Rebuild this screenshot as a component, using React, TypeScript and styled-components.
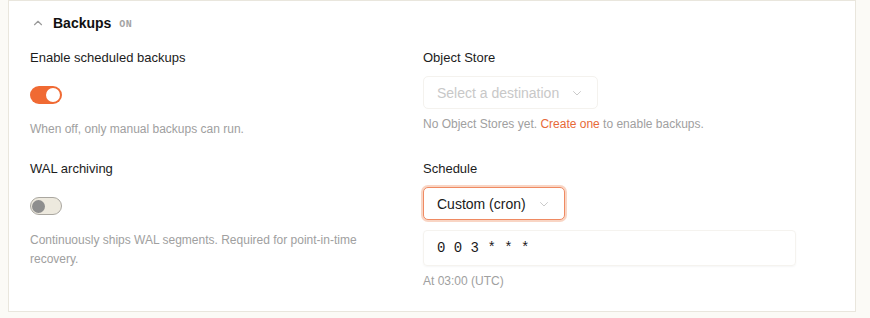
import React from "react";
import styled, { createGlobalStyle, css } from "styled-components";

const Global = createGlobalStyle`
  html, body { margin: 0; padding: 0; background: #fbfaf6; }
  body { font-family: "Liberation Sans", Arial, sans-serif; color: #1c1c1c; }
  * { box-sizing: border-box; }
`;

const Page = styled.div`
  padding: 0 14px 0 8px;
  height: 318px;
  overflow: hidden;
`;

const Card = styled.section`
  background: #ffffff;
  border: 1px solid #e9e6dd;
  padding: 13px 21px 20px 21px;
`;

const Header = styled.div`
  display: flex;
  align-items: center;
  height: 18px;
`;

const Chevron = styled.svg`
  width: 14px;
  height: 14px;
  margin-left: 1px;
  margin-right: 8px;
  color: #9a9a9a;
`;

const Title = styled.h3`
  margin: 0;
  font-size: 14px;
  font-weight: 700;
  line-height: 18px;
  color: #111;
`;

const Badge = styled.span`
  margin-left: 8px;
  font-family: "Liberation Mono", "DejaVu Sans Mono", monospace;
  font-size: 10px;
  font-weight: 700;
  letter-spacing: 0.3px;
  color: #a3a3a3;
  padding-top: 2px;
`;

const Grid = styled.div`
  display: grid;
  grid-template-columns: 373px 373px;
  column-gap: 20px;
  row-gap: 22px;
  margin-top: 18px;
`;

const Field = styled.div`
  display: flex;
  flex-direction: column;
`;

const Label = styled.div`
  font-size: 13px;
  line-height: 16px;
  color: #1c1c1c;
  margin-bottom: 10px;
`;

const ToggleRow = styled.div`
  display: flex;
  align-items: center;
  height: 38px;
`;

const Track = styled.button<{ $on: boolean }>`
  position: relative;
  width: 32px;
  height: 18px;
  border-radius: 9px;
  padding: 0;
  cursor: pointer;
  ${(p) =>
    p.$on
      ? css`
          background: #f06a33;
          border: 0;
        `
      : css`
          background: #ede9de;
          border: 1.5px solid #aaa7a0;
        `}
`;

const Knob = styled.span<{ $on: boolean }>`
  position: absolute;
  top: 50%;
  border-radius: 50%;
  ${(p) =>
    p.$on
      ? css`
          right: 2px;
          width: 14px;
          height: 14px;
          margin-top: -7px;
          background: #ffffff;
        `
      : css`
          left: 1px;
          width: 13px;
          height: 13px;
          margin-top: -6.5px;
          background: #8e8e8e;
        `}
`;

const Hint = styled.div`
  margin-top: 6px;
  font-size: 12px;
  line-height: 19px;
  color: #a0a0a0;
`;

const Link = styled.a`
  color: #e76a38;
  text-decoration: none;
`;

const SelectBox = styled.div<{ $disabled?: boolean; $focus?: boolean }>`
  display: inline-flex;
  align-items: center;
  align-self: flex-start;
  height: 33px;
  padding: 0 14px 0 13px;
  gap: 12px;
  border-radius: 5px;
  font-size: 14px;
  background: #fff;
  ${(p) =>
    p.$disabled &&
    css`
      border: 1px solid #f4f2ee;
      color: #c8c8c8;
    `}
  ${(p) =>
    p.$focus &&
    css`
      border: 1px solid #ef8a62;
      box-shadow: 0 0 0 2px #f9d5c4;
      color: #1a1a1a;
    `}
`;

const Caret = styled.svg`
  width: 12px;
  height: 12px;
  color: #c4c4c4;
`;

const CronInput = styled.div`
  margin-top: 10px;
  height: 36px;
  display: flex;
  align-items: center;
  padding: 0 13px;
  border-radius: 4px;
  border: 1px solid #f5f3ef;
  box-shadow: 0 1px 2px rgba(0, 0, 0, 0.04);
  font-family: "Liberation Mono", "DejaVu Sans Mono", monospace;
  font-size: 14px;
  color: #1a1a1a;
  white-space: pre;
`;

const ChevronUpIcon = () => (
  <Chevron viewBox="0 0 24 24" fill="none" stroke="currentColor" strokeWidth="2" strokeLinecap="round" strokeLinejoin="round">
    <path d="M6 15l6-6 6 6" />
  </Chevron>
);

const CaretDown = () => (
  <Caret viewBox="0 0 24 24" fill="none" stroke="currentColor" strokeWidth="1.8" strokeLinecap="round" strokeLinejoin="round">
    <path d="M5 9l7 7 7-7" />
  </Caret>
);

const Toggle = ({ on }: { on: boolean }) => (
  <ToggleRow>
    <Track $on={on} aria-pressed={on}>
      <Knob $on={on} />
    </Track>
  </ToggleRow>
);

export default function App() {
  return (
    <>
      <Global />
      <Page>
        <Card>
          <Header>
            <ChevronUpIcon />
            <Title>Backups</Title>
            <Badge>ON</Badge>
          </Header>
          <Grid>
            <Field>
              <Label>Enable scheduled backups</Label>
              <Toggle on />
              <Hint>When off, only manual backups can run.</Hint>
            </Field>
            <Field>
              <Label>Object Store</Label>
              <SelectBox $disabled>
                Select a destination
                <CaretDown />
              </SelectBox>
              <Hint>
                No Object Stores yet. <Link href="#">Create one</Link> to enable backups.
              </Hint>
            </Field>
            <Field>
              <Label>WAL archiving</Label>
              <Toggle on={false} />
              <Hint>Continuously ships WAL segments. Required for point-in-time recovery.</Hint>
            </Field>
            <Field>
              <Label>Schedule</Label>
              <SelectBox $focus>
                Custom (cron)
                <CaretDown />
              </SelectBox>
              <CronInput>0 0 3 * * *</CronInput>
              <Hint>At 03:00 (UTC)</Hint>
            </Field>
          </Grid>
        </Card>
      </Page>
    </>
  );
}
